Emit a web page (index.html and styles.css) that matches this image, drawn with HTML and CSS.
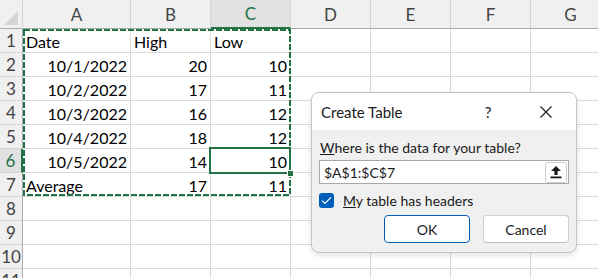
FILE: index.html
```html
<!DOCTYPE html>
<html lang="en">
<head>
    <meta charset="UTF-8">
    <meta name="viewport" content="width=device-width, initial-scale=1.0">
    <title>Create Table</title>
    <link rel="stylesheet" href="styles.css">
</head>
<body>
    <div class="sheet">
        <div class="corner">
            <svg width="22" height="28" viewBox="0 0 22 28"><polygon points="4,25 18,25 18,11" fill="#d6d6d6"/></svg>
        </div>
        <div class="col-head">A</div>
        <div class="col-head">B</div>
        <div class="col-head active-col">C</div>
        <div class="col-head">D</div>
        <div class="col-head">E</div>
        <div class="col-head">F</div>
        <div class="col-head">G</div>

        <div class="row-head">1</div>
        <div class="cell">Date</div><div class="cell">High</div><div class="cell">Low</div>
        <div class="cell"></div><div class="cell"></div><div class="cell"></div><div class="cell"></div>

        <div class="row-head">2</div>
        <div class="cell num">10/1/2022</div><div class="cell num">20</div><div class="cell num">10</div>
        <div class="cell"></div><div class="cell"></div><div class="cell"></div><div class="cell"></div>

        <div class="row-head">3</div>
        <div class="cell num">10/2/2022</div><div class="cell num">17</div><div class="cell num">11</div>
        <div class="cell"></div><div class="cell"></div><div class="cell"></div><div class="cell"></div>

        <div class="row-head">4</div>
        <div class="cell num">10/3/2022</div><div class="cell num">16</div><div class="cell num">12</div>
        <div class="cell"></div><div class="cell"></div><div class="cell"></div><div class="cell"></div>

        <div class="row-head">5</div>
        <div class="cell num">10/4/2022</div><div class="cell num">18</div><div class="cell num">12</div>
        <div class="cell"></div><div class="cell"></div><div class="cell"></div><div class="cell"></div>

        <div class="row-head active-row">6</div>
        <div class="cell num">10/5/2022</div><div class="cell num">14</div><div class="cell num">10</div>
        <div class="cell"></div><div class="cell"></div><div class="cell"></div><div class="cell"></div>

        <div class="row-head">7</div>
        <div class="cell">Average</div><div class="cell num">17</div><div class="cell num">11</div>
        <div class="cell"></div><div class="cell"></div><div class="cell"></div><div class="cell"></div>

        <div class="row-head">8</div>
        <div class="cell"></div><div class="cell"></div><div class="cell"></div>
        <div class="cell"></div><div class="cell"></div><div class="cell"></div><div class="cell"></div>

        <div class="row-head">9</div>
        <div class="cell"></div><div class="cell"></div><div class="cell"></div>
        <div class="cell"></div><div class="cell"></div><div class="cell"></div><div class="cell"></div>

        <div class="row-head">10</div>
        <div class="cell"></div><div class="cell"></div><div class="cell"></div>
        <div class="cell"></div><div class="cell"></div><div class="cell"></div><div class="cell"></div>

        <div class="row-head">11</div>
        <div class="cell"></div><div class="cell"></div><div class="cell"></div>
        <div class="cell"></div><div class="cell"></div><div class="cell"></div><div class="cell"></div>

        <!-- copy marquee around A1:C7 -->
        <svg class="marquee" width="270" height="170" viewBox="0 0 270 170">
            <rect x="1" y="1" width="266" height="165" fill="none" stroke="#217346" stroke-width="2" stroke-dasharray="6 2"/>
        </svg>
        <div class="active-cell"><span class="fill-handle"></span></div>

        <div class="dialog">
            <div class="dialog-title">
                <span class="title-text">Create Table</span>
                <span class="help">?</span>
                <svg class="close" width="12" height="12" viewBox="0 0 12 12">
                    <path d="M0.5 0.5 L11.5 11.5 M11.5 0.5 L0.5 11.5" stroke="#1a1a1a" stroke-width="1.1"/>
                </svg>
            </div>
            <div class="dialog-body">
                <div class="label"><u>W</u>here is the data for your table?</div>
                <div class="range-input">
                    <span class="range-text">$A$1:$C$7</span>
                    <span class="collapse-btn">
                        <svg width="12" height="14" viewBox="0 0 12 14">
                            <path d="M6 1 L11 6 L7.6 6 L7.6 10 L4.4 10 L4.4 6 L1 6 Z" fill="#1a1a1a"/>
                            <rect x="0.5" y="11.5" width="11" height="1.8" fill="#1a1a1a"/>
                        </svg>
                    </span>
                </div>
                <div class="check-row">
                    <span class="checkbox">
                        <svg width="11" height="9" viewBox="0 0 11 9"><path d="M1 4.6 L4 7.5 L10 1.3" fill="none" stroke="#fff" stroke-width="1.2"/></svg>
                    </span>
                    <span><u>M</u>y table has headers</span>
                </div>
                <div class="buttons">
                    <button class="btn btn-ok">OK</button>
                    <button class="btn">Cancel</button>
                </div>
            </div>
        </div>
    </div>
</body>
</html>
```

FILE: styles.css
```css
* {
    margin: 0;
    padding: 0;
    box-sizing: border-box;
}
body {
    width: 598px;
    height: 278px;
    overflow: hidden;
    background-color: white;
}
.sheet {
    position: relative;
    display: grid;
    grid-template-columns: 23px 108px repeat(6, 80px);
    grid-template-rows: 29px repeat(11, 24px);
    font-family: Lato, "Liberation Sans", sans-serif;
    font-size: 16px;
    color: #000;
}
.corner {
    background-color: #f0f0f0;
    border-right: 1px solid #d4d4d4;
    border-bottom: 1px solid #ababab;
}
.corner svg {
    display: block;
}
.col-head {
    display: flex;
    align-items: center;
    justify-content: center;
    background-color: #f0f0f0;
    border-right: 1px solid #d4d4d4;
    border-bottom: 1px solid #ababab;
    color: #444;
    font-size: 17px;
}
.active-col {
    background-color: #e1e1e1;
    color: #217346;
    border-bottom: 2px solid #217346;
}
.row-head {
    display: flex;
    align-items: center;
    justify-content: center;
    background-color: #f0f0f0;
    border-right: 1px solid #ababab;
    border-bottom: 1px solid #d4d4d4;
    color: #444;
    font-size: 17px;
}
.active-row {
    background-color: #e1e1e1;
    color: #217346;
    border-right: 2px solid #217346;
}
.cell {
    display: flex;
    align-items: center;
    padding: 1px 3px 0 3px;
    border-right: 1px solid #dadada;
    border-bottom: 1px solid #dadada;
    white-space: nowrap;
}
.num {
    justify-content: flex-end;
}
.marquee {
    position: absolute;
    left: 23px;
    top: 29px;
}
.active-cell {
    position: absolute;
    left: 209px;
    top: 147px;
    width: 82px;
    height: 27px;
    border: 2px solid #217346;
}
.fill-handle {
    position: absolute;
    right: -5px;
    bottom: -5px;
    width: 7px;
    height: 7px;
    background-color: #217346;
    border: 1px solid white;
}
.dialog {
    position: absolute;
    left: 311px;
    top: 92px;
    width: 266px;
    height: 161px;
    display: flex;
    flex-direction: column;
    background-color: #f0f0f0;
    border: 1px solid #c4c4c4;
    border-radius: 8px;
    overflow: hidden;
    box-shadow: 0 2px 6px rgba(0, 0, 0, 0.12);
    font-family: Lato, "Noto Sans", sans-serif;
    font-size: 14px;
    color: #1a1a1a;
}
.dialog-title {
    height: 37px;
    display: flex;
    align-items: center;
    padding-left: 9px;
    background-color: white;
    font-size: 15px;
}
.title-text {
    flex: 1;
}
.help {
    width: 20px;
    text-align: center;
    margin-right: 42px;
}
.close {
    margin-right: 24px;
}
.dialog-body {
    padding: 9px 7px 0 7px;
}
.label {
    height: 18px;
    line-height: 18px;
    padding-left: 1px;
}
.range-input {
    display: flex;
    align-items: center;
    justify-content: space-between;
    height: 24px;
    margin-top: 3px;
    padding: 0 1px 0 4px;
    background-color: white;
    border: 1px solid #a8a8a8;
}
.collapse-btn {
    display: flex;
    align-items: center;
    justify-content: center;
    width: 22px;
    height: 21px;
    border: 1px solid #cfcfcf;
    border-radius: 3px;
    background-color: white;
}
.check-row {
    display: flex;
    align-items: center;
    gap: 9px;
    height: 16px;
    margin-top: 8px;
}
.checkbox {
    display: flex;
    align-items: center;
    justify-content: center;
    width: 15px;
    height: 15px;
    background-color: #005fb8;
    border-radius: 3px;
}
.buttons {
    display: flex;
    justify-content: flex-end;
    gap: 13px;
    margin-top: 7px;
}
.btn {
    width: 86px;
    height: 28px;
    background-color: white;
    border: 1px solid #d0d0d0;
    border-bottom-color: #bdbdbd;
    border-radius: 4px;
    font-family: Lato, "Noto Sans", sans-serif;
    font-size: 14px;
    color: #1a1a1a;
}
.btn-ok {
    border: 1px solid #005fb8;
}
```
